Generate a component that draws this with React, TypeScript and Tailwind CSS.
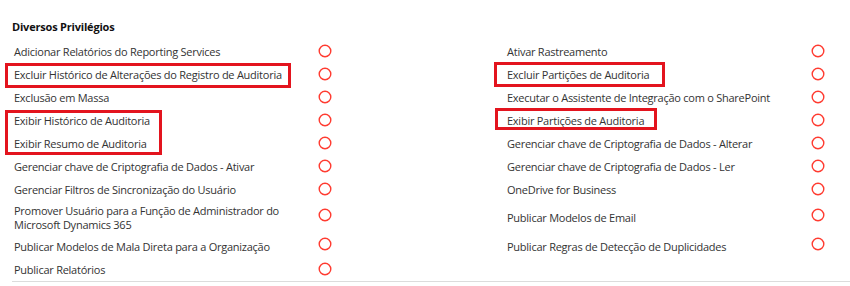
import React from "react";

type Item = { label: string };

const left: Item[] = [
  { label: "Adicionar Relatórios do Reporting Services" },
  { label: "Excluir Histórico de Alterações do Registro de Auditoria" },
  { label: "Exclusão em Massa" },
  { label: "Exibir Histórico de Auditoria" },
  { label: "Exibir Resumo de Auditoria" },
  { label: "Gerenciar chave de Criptografia de Dados - Ativar" },
  { label: "Gerenciar Filtros de Sincronização do Usuário" },
  { label: "Promover Usuário para a Função de Administrador do Microsoft Dynamics 365" },
  { label: "Publicar Modelos de Mala Direta para a Organização" },
  { label: "Publicar Relatórios" },
];

const right: Item[] = [
  { label: "Ativar Rastreamento" },
  { label: "Excluir Partições de Auditoria" },
  { label: "Executar o Assistente de Integração com o SharePoint" },
  { label: "Exibir Partições de Auditoria" },
  { label: "Gerenciar chave de Criptografia de Dados - Alterar" },
  { label: "Gerenciar chave de Criptografia de Dados - Ler" },
  { label: "OneDrive for Business" },
  { label: "Publicar Modelos de Email" },
  { label: "Publicar Regras de Detecção de Duplicidades" },
];

function Circle() {
  return (
    <svg width="14" height="14" viewBox="0 0 14 14" className="block">
      <circle cx="7" cy="7" r="5.8" fill="none" stroke="#ff3b30" strokeWidth="1.4" />
    </svg>
  );
}

const lift = ["-mt-[2px]", "-mt-[7px]", "-mt-[5px]"];

function Cell({ item, kind }: { item?: Item; kind: number }) {
  if (!item) return <div />;
  return (
    <div className="flex items-center min-h-[23px] py-[3px]">
      <div className="w-[304px] leading-[14px] pr-[14px]">{item.label}</div>
      <div className={lift[kind]}>
        <Circle />
      </div>
    </div>
  );
}

export default function App() {
  const rows = Array.from({ length: 10 }, (_, i) => i);
  return (
    <div
      className="relative w-[850px] h-[286px] bg-white text-[#333333] text-[11px] tracking-[-0.25px] overflow-hidden"
      style={{ fontFamily: '"Open Sans", "Noto Sans", sans-serif' }}
    >
      <div className="pl-[12px] pt-[18px] h-[40px] font-bold text-[11px] tracking-[-0.2px] text-[#111111] leading-[17px]">
        Diversos Privilégios
      </div>
      <div className="ml-[12px] border-b border-[#dcdcdc]">
        <div className="grid grid-cols-[493px_1fr] pl-[2px]">
          {rows.map((i) => {
            const kind = i === 7 ? 1 : i === 8 ? 2 : 0;
            return (
              <React.Fragment key={i}>
                <Cell item={left[i]} kind={kind} />
                <Cell item={right[i]} kind={kind} />
              </React.Fragment>
            );
          })}
        </div>
      </div>

      <div className="absolute left-[5px] top-[63px] w-[286px] h-[25px] border-[3px] border-[#e3141e]" />
      <div className="absolute left-[5px] top-[110px] w-[157px] h-[45px] border-[3px] border-[#e3141e]" />
      <div className="absolute left-[494px] top-[62px] w-[171px] h-[25px] border-[3px] border-[#e3141e]" />
      <div className="absolute left-[495px] top-[108px] w-[162px] h-[22px] border-[3px] border-[#e3141e]" />
    </div>
  );
}
